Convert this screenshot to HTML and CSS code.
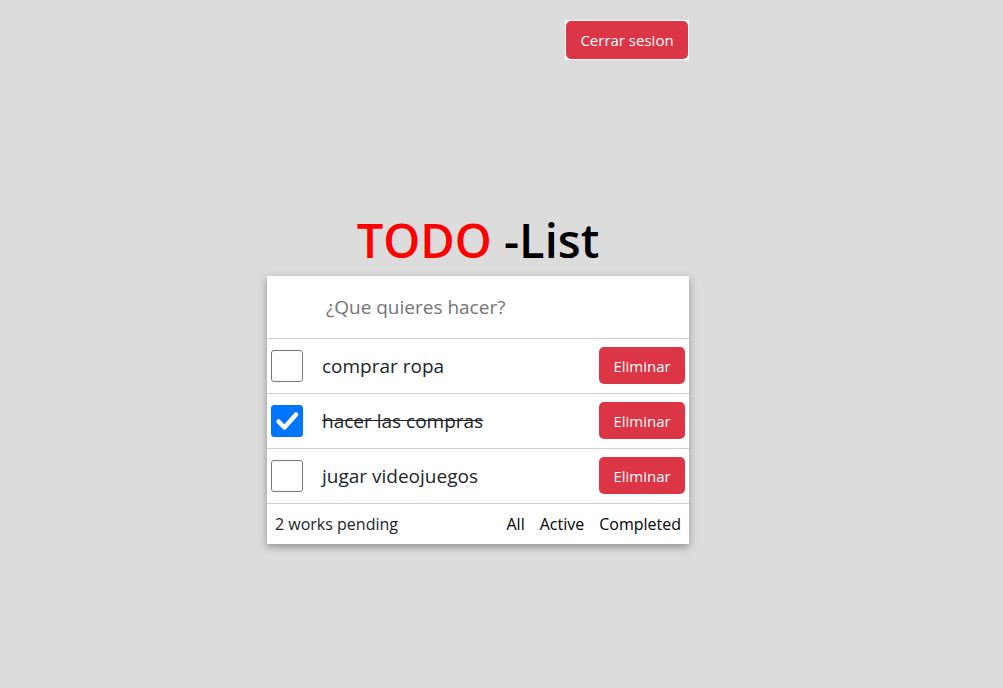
FILE: index.html
```html
<!DOCTYPE html>
<html lang="es">
<head>
<meta charset="utf-8">
<title>TODO -List</title>
<link rel="stylesheet" href="styles.css">
</head>
<body>
<div class="page">
  <div class="topbar">
    <span class="logout-wrap"><button class="btn-danger logout">Cerrar sesion</button></span>
  </div>
  <h1 class="title"><span class="todo">TODO</span> -List</h1>
  <div class="card">
    <div class="new-row">
      <input class="new-input" type="text" placeholder="¿Que quieres hacer?">
    </div>
    <ul class="list">
      <li class="item">
        <span class="check"></span>
        <span class="label">comprar ropa</span>
        <button class="btn-danger del">Eliminar</button>
      </li>
      <li class="item done">
        <span class="check checked"><svg viewBox="0 0 32 32" width="32" height="32"><path d="M7.5 16.5 L13.5 22.5 L25 9.5" fill="none" stroke="#fff" stroke-width="4.5" stroke-linecap="round" stroke-linejoin="round"/></svg></span>
        <span class="label">hacer las compras</span>
        <button class="btn-danger del">Eliminar</button>
      </li>
      <li class="item">
        <span class="check"></span>
        <span class="label">jugar videojuegos</span>
        <button class="btn-danger del">Eliminar</button>
      </li>
    </ul>
    <div class="footer">
      <span class="count">2 works pending</span>
      <nav class="filters">
        <a>All</a>
        <a>Active</a>
        <a>Completed</a>
      </nav>
    </div>
  </div>
</div>
</body>
</html>
```

FILE: styles.css
```css
* { box-sizing: border-box; }
html, body { margin: 0; padding: 0; }
body {
  background: #dcdcdc;
  font-family: "Open Sans", "Noto Sans", sans-serif;
  color: #212529;
  height: 688px;
}
.page {
  width: 422px;
  margin-left: 267px;
  padding-top: 20px;
}
.topbar {
  display: flex;
  justify-content: flex-end;
}
.logout-wrap {
  display: inline-flex;
  background: #fff;
  padding: 1px;
}
.btn-danger {
  background: #dc3545;
  color: #fff;
  border: none;
  border-radius: 5px;
  font-family: inherit;
  font-size: 15px;
  cursor: pointer;
}
.logout {
  width: 122px;
  height: 38px;
  padding: 0;
}
.title {
  margin: 152px 0 0;
  text-align: center;
  font-size: 47px;
  font-weight: 600;
  line-height: 56px;
  color: #000;
  letter-spacing: 0;
}
.todo { color: #ff0000; }
.card {
  background: #fff;
  box-shadow: 0 3px 8px rgba(0,0,0,0.35);
  margin-top: 8px;
}
.new-row {
  height: 63px;
  border-bottom: 1px solid #cfcfcf;
  display: flex;
  align-items: center;
}
.new-input {
  border: none;
  outline: none;
  width: 100%;
  height: 100%;
  padding: 0 0 0 59px;
  font-family: inherit;
  font-size: 19px;
  color: #212529;
  background: transparent;
}
.new-input::placeholder { color: #757575; }
.list { list-style: none; margin: 0; padding: 0; }
.item {
  height: 55px;
  border-bottom: 1px solid #cfcfcf;
  display: flex;
  align-items: center;
  padding: 0 4px 1px;
}
.check {
  width: 32px;
  height: 32px;
  border: 1px solid #767676;
  border-radius: 3px;
  flex: none;
  display: flex;
}
.check.checked {
  background: #0075ff;
  border-color: #0075ff;
}
.check svg { display: block; margin: -1px; }
.label {
  margin-left: 19px;
  font-size: 19px;
  flex: 1;
  color: #212529;
}
.done .label { text-decoration: line-through; }
.del {
  width: 86px;
  height: 37px;
  font-size: 15px;
  padding: 0;
}
.footer {
  height: 40px;
  display: flex;
  align-items: center;
  justify-content: space-between;
  padding: 0 8px;
  font-size: 16px;
}
.filters { display: flex; gap: 15px; }
.filters a { color: #000; }
```
